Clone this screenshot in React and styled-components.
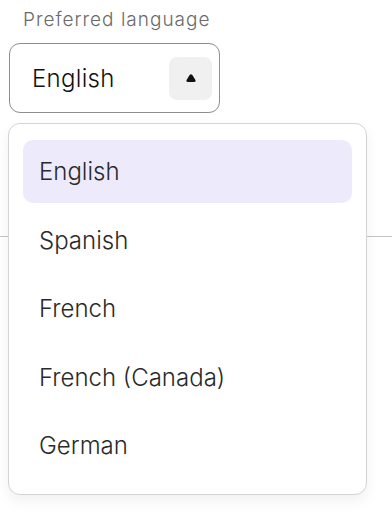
import React from 'react'
import styled, { createGlobalStyle } from 'styled-components'

const Global = createGlobalStyle`
  body {
    margin: 0;
    background: #ffffff;
    font-family: Inter, "Noto Sans", sans-serif;
  }
`

const languages = ['English', 'Spanish', 'French', 'French (Canada)', 'German']

function App() {
    return (
        <Page>
            <Global />
            <Field>
                <Label>Preferred language</Label>
                <SelectBox>
                    <Value>English</Value>
                    <Toggle>
                        <svg width="12" height="10" viewBox="0 0 12 10">
                            <path d="M6 1.2 C6.8 1.2 7.4 2 8 3 L10.4 7 C11 8.2 10.4 8.9 9.2 8.9 L2.8 8.9 C1.6 8.9 1 8.2 1.6 7 L4 3 C4.6 2 5.2 1.2 6 1.2 Z" fill="#111" />
                        </svg>
                    </Toggle>
                </SelectBox>
                <Menu>
                    {languages.map((lang, i) => (
                        <Option key={lang} active={i === 0}>{lang}</Option>
                    ))}
                </Menu>
            </Field>
            <Divider />
        </Page>
    )
}

export default App

const Page = styled.div`
    width: 392px;
    height: 514px;
    position: relative;
    overflow: hidden;
`

const Field = styled.div`
    position: relative;
    padding: 8px 0 0 9px;
    width: 210px;
`

const Label = styled.div`
    font-size: 19px;
    font-weight: 300;
    letter-spacing: 1px;
    color: #6a6a6a;
    padding-left: 14px;
    height: 24px;
    line-height: 24px;
    margin-bottom: 11px;
`

const SelectBox = styled.div`
    box-sizing: border-box;
    width: 211px;
    height: 70px;
    border: 1.5px solid #8e8e8e;
    border-radius: 11px;
    display: flex;
    align-items: center;
    justify-content: space-between;
    padding: 0 7px 0 22px;
`

const Value = styled.span`
    font-size: 24px;
    font-weight: 300;
    letter-spacing: 0.3px;
    color: #111;
`

const Toggle = styled.div`
    width: 43px;
    height: 43px;
    border-radius: 8px;
    background: #f0f0f0;
    display: flex;
    align-items: center;
    justify-content: center;
`

const Menu = styled.div`
    position: absolute;
    top: 123px;
    left: 8px;
    width: 359px;
    height: 372px;
    box-sizing: border-box;
    background: #fff;
    border: 1.5px solid #d4d4d4;
    border-radius: 12px;
    box-shadow: 0 6px 14px rgba(0, 0, 0, 0.06);
    padding: 16px 14px;
    display: flex;
    flex-direction: column;
    gap: 5.5px;
    z-index: 2;
`

const Option = styled.div`
    height: 63px;
    flex-shrink: 0;
    border-radius: 10px;
    display: flex;
    align-items: center;
    padding-left: 16px;
    font-size: 24px;
    font-weight: 300;
    color: #2a2a2a;
    background: ${p => (p.active ? '#edeafc' : 'transparent')};
`

const Divider = styled.div`
    margin-top: 123px;
    height: 1px;
    background: #c4c4c4;
`
